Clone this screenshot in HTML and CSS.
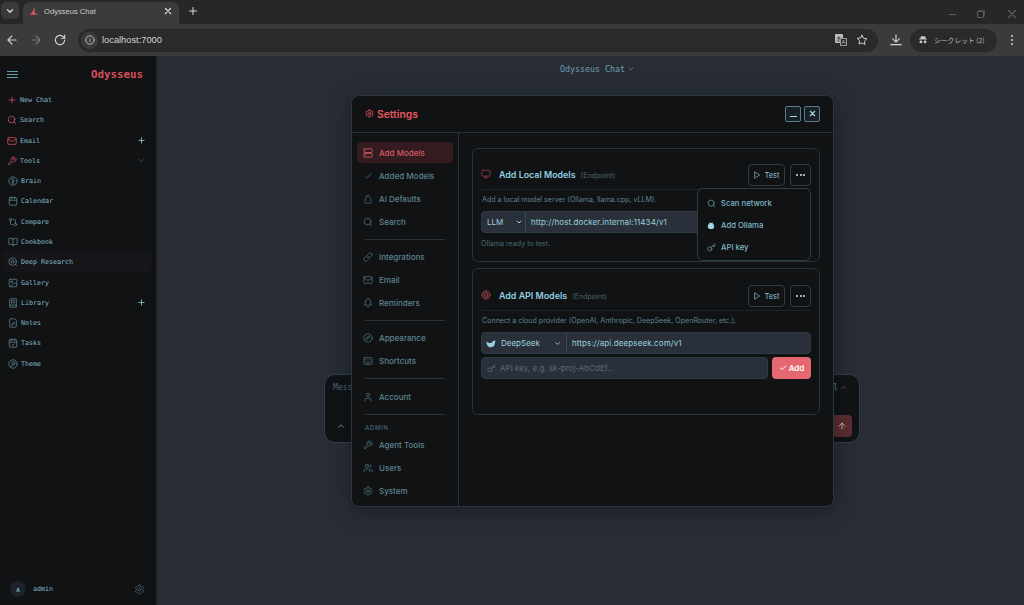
FILE: index.html
```html
<!DOCTYPE html>
<html lang="en">
<head>
<meta charset="utf-8">
<title>Odysseus Chat</title>
<link rel="stylesheet" href="styles.css">
</head>
<body>
<svg class="defs" width="0" height="0" aria-hidden="true">
  <symbol id="i-plus" viewBox="0 0 24 24"><path d="M5 12h14M12 5v14"/></symbol>
  <symbol id="i-search" viewBox="0 0 24 24"><circle cx="11" cy="11" r="8"/><path d="m21 21-4.3-4.3"/></symbol>
  <symbol id="i-mail" viewBox="0 0 24 24"><rect x="2" y="4" width="20" height="16" rx="2"/><path d="m22 7-8.97 5.7a1.94 1.94 0 0 1-2.06 0L2 7"/></symbol>
  <symbol id="i-wrench" viewBox="0 0 24 24"><path d="M14.7 6.3a1 1 0 0 0 0 1.4l1.6 1.6a1 1 0 0 0 1.4 0l3.77-3.77a6 6 0 0 1-7.94 7.94l-6.91 6.91a2.12 2.12 0 0 1-3-3l6.91-6.91a6 6 0 0 1 7.94-7.94l-3.76 3.76z"/></symbol>
  <symbol id="i-brain" viewBox="0 0 24 24"><circle cx="12" cy="12" r="10"/><path d="M12 4v16M12 10 8 7M12 15l4-4M12 17l-4-3"/></symbol>
  <symbol id="i-calendar" viewBox="0 0 24 24"><rect x="3" y="4" width="18" height="18" rx="2"/><path d="M16 2v4M8 2v4M3 10h18"/></symbol>
  <symbol id="i-compare" viewBox="0 0 24 24"><circle cx="18" cy="18" r="3"/><circle cx="6" cy="6" r="3"/><path d="M13 6h3a2 2 0 0 1 2 2v7M11 18H8a2 2 0 0 1-2-2V9"/></symbol>
  <symbol id="i-book" viewBox="0 0 24 24"><path d="M12 7v14M3 18a1 1 0 0 1-1-1V4a1 1 0 0 1 1-1h5a4 4 0 0 1 4 4 4 4 0 0 1 4-4h5a1 1 0 0 1 1 1v13a1 1 0 0 1-1 1h-6a3 3 0 0 0-3 3 3 3 0 0 0-3-3z"/></symbol>
  <symbol id="i-deep" viewBox="0 0 24 24"><circle cx="11" cy="11" r="9"/><circle cx="11" cy="11" r="3.5"/><path d="m21 21-3.5-3.5"/></symbol>
  <symbol id="i-image" viewBox="0 0 24 24"><rect x="3" y="3" width="18" height="18" rx="2"/><circle cx="9" cy="9" r="2"/><path d="m21 15-3.1-3.1a2 2 0 0 0-2.8 0L6 21"/></symbol>
  <symbol id="i-library" viewBox="0 0 24 24"><path d="M4 19.5v-15A2.5 2.5 0 0 1 6.5 2H20v20H6.5a2.5 2.5 0 0 1 0-5H20"/><path d="M9 6h6v6H9z"/></symbol>
  <symbol id="i-note" viewBox="0 0 24 24"><path d="M15 2H6a2 2 0 0 0-2 2v16a2 2 0 0 0 2 2h12a2 2 0 0 0 2-2V7z"/><path d="M9 17l1-3 4-4 2 2-4 4z"/></symbol>
  <symbol id="i-task" viewBox="0 0 24 24"><rect x="3" y="4" width="18" height="18" rx="2"/><path d="M16 2v4M8 2v4M3 10h18M9 16l2 2 4-4"/></symbol>
  <symbol id="i-theme" viewBox="0 0 24 24"><circle cx="12" cy="12" r="10"/><circle cx="13" cy="10" r="3.5"/><path d="M7 20c0-4 2-6 6-6"/></symbol>
  <symbol id="i-gear" viewBox="0 0 24 24"><path d="M12.22 2h-.44a2 2 0 0 0-2 2v.18a2 2 0 0 1-1 1.73l-.43.25a2 2 0 0 1-2 0l-.15-.08a2 2 0 0 0-2.73.73l-.22.38a2 2 0 0 0 .73 2.73l.15.1a2 2 0 0 1 1 1.72v.51a2 2 0 0 1-1 1.74l-.15.09a2 2 0 0 0-.73 2.73l.22.38a2 2 0 0 0 2.73.73l.15-.08a2 2 0 0 1 2 0l.43.25a2 2 0 0 1 1 1.73V20a2 2 0 0 0 2 2h.44a2 2 0 0 0 2-2v-.18a2 2 0 0 1 1-1.73l.43-.25a2 2 0 0 1 2 0l.15.08a2 2 0 0 0 2.73-.73l.22-.39a2 2 0 0 0-.73-2.73l-.15-.08a2 2 0 0 1-1-1.74v-.5a2 2 0 0 1 1-1.74l.15-.09a2 2 0 0 0 .73-2.73l-.22-.38a2 2 0 0 0-2.73-.73l-.15.08a2 2 0 0 1-2 0l-.43-.25a2 2 0 0 1-1-1.73V4a2 2 0 0 0-2-2z"/><circle cx="12" cy="12" r="3"/></symbol>
  <symbol id="i-server" viewBox="0 0 24 24"><rect x="2" y="2" width="20" height="9" rx="2"/><rect x="2" y="13" width="20" height="9" rx="2"/><path d="M6 6.5h.01M6 17.5h.01"/></symbol>
  <symbol id="i-check" viewBox="0 0 24 24"><path d="M20 6 9 17l-5-5"/></symbol>
  <symbol id="i-bag" viewBox="0 0 24 24"><path d="M9 6a3 3 0 0 1 6 0c0 2 5 6 5 12a4 4 0 0 1-4 4H8a4 4 0 0 1-4-4c0-6 5-10 5-12z"/></symbol>
  <symbol id="i-link" viewBox="0 0 24 24"><path d="M10 13a5 5 0 0 0 7.54.54l3-3a5 5 0 0 0-7.07-7.07l-1.72 1.71"/><path d="M14 11a5 5 0 0 0-7.54-.54l-3 3a5 5 0 0 0 7.07 7.07l1.71-1.71"/></symbol>
  <symbol id="i-bell" viewBox="0 0 24 24"><path d="M6 8a6 6 0 0 1 12 0c0 7 3 9 3 9H3s3-2 3-9"/><path d="M10.3 21a1.94 1.94 0 0 0 3.4 0"/></symbol>
  <symbol id="i-appear" viewBox="0 0 24 24"><circle cx="12" cy="12" r="10"/><path d="M8 15c0-4 3-7 8-8-1 5-3 8-8 8z"/></symbol>
  <symbol id="i-keyboard" viewBox="0 0 24 24"><rect x="2" y="4" width="20" height="16" rx="2"/><path d="M6 8h.01M10 8h.01M14 8h.01M18 8h.01M6 12h.01M10 12h.01M14 12h.01M18 12h.01M7 16h10"/></symbol>
  <symbol id="i-user" viewBox="0 0 24 24"><path d="M19 21v-2a4 4 0 0 0-4-4H9a4 4 0 0 0-4 4v2"/><circle cx="12" cy="7" r="4"/></symbol>
  <symbol id="i-users" viewBox="0 0 24 24"><path d="M16 21v-2a4 4 0 0 0-4-4H6a4 4 0 0 0-4 4v2"/><circle cx="9" cy="7" r="4"/><path d="M22 21v-2a4 4 0 0 0-3-3.87M16 3.13a4 4 0 0 1 0 7.75"/></symbol>
  <symbol id="i-monitor" viewBox="0 0 24 24"><rect x="2" y="3" width="20" height="14" rx="2"/><path d="M8 21h8M12 17v4"/></symbol>
  <symbol id="i-globe" viewBox="0 0 24 24"><circle cx="12" cy="12" r="10"/><path d="M2 12h20M4 7h16M4 17h16M12 2a15 15 0 0 1 0 20 15 15 0 0 1 0-20"/></symbol>
  <symbol id="i-play" viewBox="0 0 24 24"><path d="M6 3l14 9-14 9z"/></symbol>
  <symbol id="i-key" viewBox="0 0 24 24"><circle cx="7.5" cy="15.5" r="5.5"/><path d="m21 2-9.6 9.6M15.5 7.5l3 3L22 7l-3-3"/></symbol>
  <symbol id="i-down" viewBox="0 0 24 24"><path d="m6 9 6 6 6-6"/></symbol>
  <symbol id="i-up" viewBox="0 0 24 24"><path d="m18 15-6-6-6 6"/></symbol>
  <symbol id="i-arrow-up" viewBox="0 0 24 24"><path d="m5 12 7-7 7 7M12 19V5"/></symbol>
  <symbol id="i-left" viewBox="0 0 24 24"><path d="m12 19-7-7 7-7M19 12H5"/></symbol>
  <symbol id="i-right" viewBox="0 0 24 24"><path d="M5 12h14M12 5l7 7-7 7"/></symbol>
  <symbol id="i-reload" viewBox="0 0 24 24"><path d="M20 12a8 8 0 1 1-2.4-5.7L20 9"/><path d="M20 3.500v5.500h-5.500"/></symbol>
  <symbol id="i-info" viewBox="0 0 24 24"><circle cx="12" cy="12" r="10"/><path d="M12 16v-5M12 8h.01"/></symbol>
  <symbol id="i-x" viewBox="0 0 24 24"><path d="M18 6 6 18M6 6l12 12"/></symbol>
  <symbol id="i-star" viewBox="0 0 24 24"><path d="m12 2.500 3 6.100 6.700 1-4.850 4.700 1.150 6.700-6-3.150L6 20l1.150-6.700L2.300 8.600l6.700-1z"/></symbol>
  <symbol id="i-download" viewBox="0 0 24 24"><path d="M3 20h18M12 3v12M6.500 10l5.500 5.500 5.500-5.500"/></symbol>
</svg>

<div class="browser">
  <div class="tabstrip">
    <button class="tab-list"><svg class="ic ic-10 bold"><use href="#i-down"/></svg></button>
    <div class="tab">
      <svg class="favicon" viewBox="0 0 16 16"><path d="M9 1 5 10 1 14h14l-4-2-2-1z"/></svg>
      <span class="tab-title">Odysseus Chat</span>
      <svg class="ic ic-10 bold"><use href="#i-x"/></svg>
    </div>
    <svg class="ic ic-12 new-tab"><use href="#i-plus"/></svg>
    <div class="winctl">
      <span class="win-min"></span>
      <span class="win-max"></span>
      <svg class="ic ic-14 win-x"><use href="#i-x"/></svg>
    </div>
  </div>
  <div class="toolbar">
    <svg class="ic ic-14 tb"><use href="#i-left"/></svg>
    <svg class="ic ic-14 tb off"><use href="#i-right"/></svg>
    <svg class="ic ic-14 tb"><use href="#i-reload"/></svg>
    <div class="omnibox">
      <span class="info"><svg class="ic ic-10"><use href="#i-info"/></svg></span>
      <span class="url">localhost:7000</span>
      <span class="translate"><span class="tr-a">あ</span><span class="tr-b">A</span></span>
      <svg class="ic ic-12 star"><use href="#i-star"/></svg>
    </div>
    <svg class="ic ic-14 dl"><use href="#i-download"/></svg>
    <div class="incognito">
      <svg class="spy" viewBox="0 0 16 16"><path d="M4.500 2h7l1 4h2v1h-13V6h2z"/><circle cx="4.700" cy="11" r="2.300"/><circle cx="11.300" cy="11" r="2.300"/><path d="M7 10.500h2"/></svg>
      <span>シークレット (2)</span>
    </div>
    <div class="kebab"><i></i><i></i><i></i></div>
  </div>

  <div class="app">
    <aside class="sidebar">
      <div class="side-head">
        <div class="burger"><i></i><i></i><i></i></div>
        <div class="brand">Odysseus</div>
      </div>
      <nav class="side-nav">
        <div class="side-row first"><svg class="ic ic-s red"><use href="#i-plus"/></svg><span>New Chat</span></div>
        <div class="side-row first"><svg class="ic ic-s red"><use href="#i-search"/></svg><span>Search</span></div>
        <div class="side-row first"><svg class="ic ic-s red"><use href="#i-mail"/></svg><span>Email</span><svg class="ic ic-9 tail"><use href="#i-plus"/></svg></div>
        <div class="side-row first"><svg class="ic ic-s red"><use href="#i-wrench"/></svg><span>Tools</span><svg class="ic ic-9 tail dim"><use href="#i-down"/></svg></div>
        <div class="side-row"><svg class="ic ic-s"><use href="#i-brain"/></svg><span>Brain</span></div>
        <div class="side-row"><svg class="ic ic-s"><use href="#i-calendar"/></svg><span>Calendar</span></div>
        <div class="side-row"><svg class="ic ic-s"><use href="#i-compare"/></svg><span>Compare</span></div>
        <div class="side-row"><svg class="ic ic-s"><use href="#i-book"/></svg><span>Cookbook</span></div>
        <div class="side-row active"><svg class="ic ic-s"><use href="#i-deep"/></svg><span>Deep Research</span></div>
        <div class="side-row"><svg class="ic ic-s"><use href="#i-image"/></svg><span>Gallery</span></div>
        <div class="side-row"><svg class="ic ic-s"><use href="#i-library"/></svg><span>Library</span><svg class="ic ic-9 tail"><use href="#i-plus"/></svg></div>
        <div class="side-row"><svg class="ic ic-s"><use href="#i-note"/></svg><span>Notes</span></div>
        <div class="side-row"><svg class="ic ic-s"><use href="#i-task"/></svg><span>Tasks</span></div>
        <div class="side-row"><svg class="ic ic-s"><use href="#i-theme"/></svg><span>Theme</span></div>
      </nav>
      <div class="side-foot">
        <span class="avatar">A</span>
        <span class="username">admin</span>
        <svg class="ic ic-11 foot-gear"><use href="#i-gear"/></svg>
      </div>
    </aside>

    <main class="main">
      <div class="chat-title">Odysseus Chat <svg class="ic ic-8"><use href="#i-down"/></svg></div>
      <div class="composer">
        <div class="composer-top"><span class="placeholder">Message</span><span class="model">l <svg class="ic ic-7"><use href="#i-up"/></svg></span></div>
        <div class="composer-bottom">
          <svg class="ic ic-10"><use href="#i-up"/></svg>
          <span class="send"><svg class="ic ic-10"><use href="#i-arrow-up"/></svg></span>
        </div>
      </div>

      <section class="modal">
        <header class="modal-head">
          <svg class="ic ic-9 head-gear"><use href="#i-gear"/></svg>
          <h1>Settings</h1>
          <div class="modal-actions">
            <button class="win-btn"><span class="minus"></span></button>
            <button class="win-btn"><svg class="ic ic-9 bold"><use href="#i-x"/></svg></button>
          </div>
        </header>
        <div class="modal-body">
          <nav class="set-nav">
            <div class="set-item current"><svg class="ic ic-10"><use href="#i-server"/></svg>Add Models</div>
            <div class="set-item"><svg class="ic ic-10"><use href="#i-check"/></svg>Added Models</div>
            <div class="set-item"><svg class="ic ic-10"><use href="#i-bag"/></svg>AI Defaults</div>
            <div class="set-item"><svg class="ic ic-10"><use href="#i-search"/></svg>Search</div>
            <hr class="set-sep">
            <div class="set-item"><svg class="ic ic-10"><use href="#i-link"/></svg>Integrations</div>
            <div class="set-item"><svg class="ic ic-10"><use href="#i-mail"/></svg>Email</div>
            <div class="set-item"><svg class="ic ic-10"><use href="#i-bell"/></svg>Reminders</div>
            <hr class="set-sep">
            <div class="set-item"><svg class="ic ic-10"><use href="#i-appear"/></svg>Appearance</div>
            <div class="set-item"><svg class="ic ic-10"><use href="#i-keyboard"/></svg>Shortcuts</div>
            <hr class="set-sep sep-wide">
            <div class="set-item"><svg class="ic ic-10"><use href="#i-user"/></svg>Account</div>
            <hr class="set-sep sep-tight">
            <div class="set-label">ADMIN</div>
            <div class="set-item"><svg class="ic ic-10"><use href="#i-wrench"/></svg>Agent Tools</div>
            <div class="set-item"><svg class="ic ic-10"><use href="#i-users"/></svg>Users</div>
            <div class="set-item"><svg class="ic ic-10"><use href="#i-gear"/></svg>System</div>
          </nav>
          <div class="set-content">
            <article class="card card-local">
              <div class="card-head">
                <svg class="ic ic-10 darkred"><use href="#i-monitor"/></svg>
                <h2>Add Local Models</h2><span class="muted">(Endpoint)</span>
                <button class="btn-test"><svg class="ic ic-8"><use href="#i-play"/></svg>Test</button>
                <button class="btn-more"><i></i><i></i><i></i></button>
              </div>
              <p class="desc">Add a local model server (Ollama, llama.cpp, vLLM).</p>
              <div class="field-row">
                <span class="select llm">LLM<svg class="ic ic-8 bold"><use href="#i-down"/></svg></span>
                <span class="value">http://host.docker.internal:11434/v1</span>
              </div>
              <p class="status">Ollama ready to test.</p>
              <div class="menu">
                <div class="menu-item"><svg class="ic ic-9"><use href="#i-search"/></svg>Scan network</div>
                <div class="menu-item"><svg class="ollama" viewBox="0 0 10 10"><path d="M2.800 2.500 3.300.800 4.200 2h1.600L6.700.800l.5 1.700C8.500 3.500 9 5 9 6.500 9 8.500 7.500 9.500 5 9.500S1 8.500 1 6.500C1 5 1.500 3.500 2.800 2.500z"/></svg>Add Ollama</div>
                <div class="menu-item"><svg class="ic ic-9"><use href="#i-key"/></svg>API key</div>
              </div>
            </article>
            <article class="card card-api">
              <div class="card-head">
                <svg class="ic ic-10 darkred"><use href="#i-globe"/></svg>
                <h2>Add API Models</h2><span class="muted">(Endpoint)</span>
                <button class="btn-test"><svg class="ic ic-8"><use href="#i-play"/></svg>Test</button>
                <button class="btn-more"><i></i><i></i><i></i></button>
              </div>
              <p class="desc">Connect a cloud provider (OpenAI, Anthropic, DeepSeek, OpenRouter, etc.).</p>
              <div class="field-row">
                <span class="select provider"><svg class="whale" viewBox="0 0 12 10"><path d="M.5 2.500C2 4 4 4.500 6 4.500 7 4.500 7.500 3 8.500 2 9.500 1.200 10.500 1.200 11.500 1.500 11 3 10.500 4 10.500 5.500 10 8 8 9.500 5.500 9.500 2.500 9.500.5 6.500.5 2.500z"/></svg>DeepSeek<svg class="ic ic-6 bold"><use href="#i-down"/></svg></span>
                <span class="value">https://api.deepseek.com/v1</span>
              </div>
              <div class="key-row">
                <span class="key-input"><svg class="ic ic-9"><use href="#i-key"/></svg>API key, e.g. sk-proj-AbCdEf...</span>
                <button class="btn-add"><svg class="ic ic-8 bold"><use href="#i-check"/></svg>Add</button>
              </div>
            </article>
          </div>
        </div>
      </section>
    </main>
  </div>
</div>
</body>
</html>
```
FILE: styles.css
```css
* { box-sizing: border-box; }
html, body { margin: 0; height: 100%; overflow: hidden; background: #282c35; }
body { font-family: Inter, "Liberation Sans", sans-serif; }
.defs { position: absolute; }
button { font: inherit; padding: 0; border: 0; background: none; color: inherit; }
p, h1, h2 { margin: 0; }

.ic { fill: none; stroke: currentColor; stroke-width: 2; stroke-linecap: round; stroke-linejoin: round; flex: none; display: block; }
.bold { stroke-width: 3; }
.ic-s { width: 10px; height: 10px; margin: 0 .5px; }
.ic-6 { width: 7px; height: 7px; }
.ic-7 { width: 7px; height: 7px; }
.ic-8 { width: 8px; height: 8px; }
.ic-9 { width: 9px; height: 9px; }
.ic-10 { width: 10px; height: 10px; }
.ic-11 { width: 11px; height: 11px; }
.ic-12 { width: 12px; height: 12px; }
.ic-14 { width: 14px; height: 14px; }
.red { color: #c24f5a; }
.darkred { color: #8c3d45; }

.browser { width: 1024px; height: 605px; display: flex; flex-direction: column; }

/* tab strip */
.tabstrip { height: 24px; background: #272727; display: flex; align-items: flex-end; color: #d8d8d8; flex: none; }
.tab-list { width: 18px; height: 17px; margin: 0 4px 5px 1px; border-radius: 5px; background: #3a3a3a; display: flex; align-items: center; justify-content: center; }
.tab { width: 156px; height: 22px; background: #3b3b3b; border-radius: 7px 7px 0 0; display: flex; align-items: center; padding: 0 6px 4px 6px; }
.favicon { width: 10px; height: 10px; fill: #d9535f; flex: none; }
.tab-title { flex: 1; margin-left: 5px; font: 7.600px "Liberation Sans", sans-serif; color: #c9c9c9; }
.new-tab { margin: 0 0 7px 8px; }
.winctl { margin-left: auto; display: flex; align-items: center; gap: 21px; padding: 0 5px 3px 0; color: #666; }
.win-min { width: 7px; height: 1px; background: #5f5f5f; }
.win-max { width: 7px; height: 7px; border: 1px solid #5f5f5f; border-radius: 1px; box-shadow: 1px -1px 0 0 #4f4f4f; }
.win-x { color: #5c5c5c; }

/* toolbar */
.toolbar { height: 32px; background: #3b3b3b; display: flex; align-items: center; color: #cfcfcf; flex: none; padding-left: 5px; }
.tb { margin-right: 10px; }
.tb.off { color: #777; }
.omnibox { width: 800px; height: 23px; margin-left: 1px; background: #2a2a2a; border-radius: 12px; display: flex; align-items: center; padding: 0 10px 0 3px; }
.info { width: 17px; height: 17px; border-radius: 50%; background: #3b3b3b; display: flex; align-items: center; justify-content: center; }
.url { margin-left: 4px; flex: 1; font: 9.300px "Liberation Sans", sans-serif; color: #d4d4d4; }
.translate { position: relative; width: 12px; height: 12px; margin-right: 9px; }
.tr-a { position: absolute; left: 0; top: 0; width: 8px; height: 9px; background: #bdbdbd; color: #333; font: 6px/9px "Noto Sans CJK JP", sans-serif; text-align: center; border-radius: 1px; }
.tr-b { position: absolute; right: 0; bottom: 0; width: 7px; height: 8px; border: 1px solid #9a9a9a; background: #2a2a2a; color: #bbb; font: 6px/6px "Liberation Sans", sans-serif; text-align: center; }
.dl { margin-left: 10.500px; }
.incognito { width: 87px; height: 23px; margin-left: 7.500px; background: #2a2a2a; border-radius: 12px; display: flex; align-items: center; padding-left: 8px; font: 6.800px "Noto Sans CJK JP", sans-serif; color: #bdbdbd; gap: 6px; white-space: nowrap; }
.spy { width: 10px; height: 10px; fill: #c9c9c9; flex: none; }
.kebab { margin-left: 14px; display: flex; flex-direction: column; gap: 2px; }
.kebab i { width: 2px; height: 2px; background: #cfcfcf; display: block; border-radius: 50%; }

/* app */
.app { flex: 1; min-height: 0; display: flex; }
.sidebar { width: 157px; background: #111214; display: flex; flex-direction: column; font-family: "DejaVu Sans Mono", monospace; flex: none; border-right: 1px solid #1d2026; }
.side-head { height: 34px; display: flex; align-items: center; justify-content: space-between; padding: 2px 13px 0 7px; flex: none; }
.burger { display: flex; flex-direction: column; gap: 2px; }
.burger i { display: block; width: 11px; height: 1px; background: #62a0ae; }
.brand { font-size: 10.800px; font-weight: 700; color: #d9505c; }
.side-nav { flex: 1; }
.side-row { height: 20.280px; display: flex; align-items: center; gap: 3px; margin: 0 5px 0 3px; padding: 0 5px 0 4px; font-size: 6.650px; border-radius: 3px; color: #84bac9; }
.side-row.first > .ic:first-child { margin-left: -.5px; }
.side-row > .ic:first-child:not(.red) { color: #5a7f8a; }
.side-row .tail { margin-left: auto; color: #9cd6e6; }
.side-row .tail.dim { color: #3f5660; }
.side-row.active { background: #16161a; }
.side-foot { height: 32px; display: flex; align-items: center; padding: 0 10px; color: #84bac9; font-size: 6.700px; flex: none; }
.avatar { width: 16px; height: 16px; background: #1c2229; border-radius: 50%; display: flex; align-items: center; justify-content: center; font-weight: 700; font-size: 6px; color: #79a9b6; }
.username { margin-left: 7px; flex: 1; }
.foot-gear { color: #3e5a64; margin-right: 1px; }

/* main */
.main { flex: 1; background: #282c35; position: relative; min-width: 0; }
.chat-title { margin-top: 8px; padding-left: 403px; display: flex; align-items: center; gap: 2px; height: 9px; font: 8.300px "DejaVu Sans Mono", monospace; color: #6f9fae; }
.composer { width: 536px; height: 69px; margin: 301px 0 0 167px; background: #121316; border: 1px solid #2d3f4a; border-radius: 11px; display: flex; flex-direction: column; justify-content: space-between; padding: 8px 7px 5.500px 8px; font: 8px "DejaVu Sans Mono", monospace; color: #4c6570; }
.composer-top, .composer-bottom { display: flex; justify-content: space-between; align-items: center; }
.model { display: flex; align-items: center; gap: 2px; color: #6c8f9c; padding-right: 5px; }
.composer-bottom { color: #7fa8b5; padding-left: 3px; }
.send { width: 20px; height: 22px; background: #5a2c31; border-radius: 4px; display: flex; align-items: center; justify-content: center; color: #d9c9c9; }

/* modal */
.modal { position: absolute; left: 194px; top: 39px; width: 483px; height: 412px; background: #111214; border: 1px solid #273842; border-radius: 8px; display: flex; flex-direction: column; box-shadow: 0 4px 20px rgba(0,0,0,.35); color: #7fb7c7; }
.modal-head { height: 37px; display: flex; align-items: center; padding: 0 13px 1px; gap: 3px; border-bottom: 1px solid #24333c; flex: none; }
.head-gear { color: #e0525f; stroke-width: 2.500; }
.modal-head h1 { font-size: 10.300px; font-weight: 600; color: #e2595f; }
.modal-actions { margin-left: auto; display: flex; gap: 3px; }
.win-btn { width: 16px; height: 16px; border: 1px solid #55808e; border-radius: 2px; display: flex; align-items: center; justify-content: center; color: #a9d8e4; background: #1a2027; }
.minus { width: 7px; height: 1.500px; background: #a9d8e4; margin-top: 6px; display: block; }
.modal-body { flex: 1; min-height: 0; display: flex; }

.set-nav { width: 107px; padding: 9px 5px 0; border-right: 1px solid #24333c; flex: none; }
.set-item { height: 23px; display: flex; align-items: center; gap: 6px; padding-left: 6px; font-size: 8px; font-weight: 500; color: #5d8492; border-radius: 4px; }
.set-item .ic { color: #4a6b77; }
.set-item.current { height: 21px; margin-bottom: 1px; background: #331b20; color: #d65a64; }
.set-item.current .ic { color: #d65a64; }
.set-sep { height: 1px; border: 0; background: #24333c; margin: 6px 8px 5px; }
.set-sep.sep-wide { margin-bottom: 6px; }
.set-sep.sep-tight { margin-bottom: 4px; }
.set-label { font-size: 6px; font-weight: 600; letter-spacing: .6px; color: #3f5c67; height: 14px; padding: 5px 0 0 8px; }

.set-content { flex: 1; min-width: 0; padding: 15px 13px 0; display: flex; flex-direction: column; gap: 6px; }
.card { position: relative; border: 1px solid #24333c; border-radius: 6px; padding: 15px 8px 0; }
.card-local { height: 114px; }
.card-api { height: 147px; padding-top: 16px; }
.card-head { height: 26px; display: flex; align-items: flex-start; border-bottom: 1px solid #1b242a; }
.card-head > .ic { margin-top: 5px; color: #8c3d45; }
.card-head h2 { margin: 5px 0 0 8px; font-size: 8.900px; font-weight: 600; color: #8fd0e2; }
.card-head .muted { margin: 7px 0 0 5px; font-size: 7.100px; color: #4c6570; }
.btn-test { margin-left: auto; width: 37px; height: 22px; border: 1px solid #2b3f49; border-radius: 4px; display: flex; align-items: center; justify-content: center; gap: 3px; font-size: 7.500px; color: #8fc0ce; }
.btn-more { margin-left: 5px; width: 21px; height: 22px; border: 1px solid #2b3f49; border-radius: 4px; display: flex; align-items: center; justify-content: center; gap: 1.500px; }
.btn-more i { width: 2px; height: 2px; background: #cbe8f0; border-radius: 50%; display: block; }
.desc { margin: 5px 0 0 1px; height: 16px; font-size: 7.100px; line-height: 9px; color: #5d8492; }
.field-row { height: 22px; display: flex; align-items: stretch; background: #2a303a; border: 1px solid #2b3c46; border-radius: 4px; font-size: 8px; color: #9bd0de; }
.select { display: flex; align-items: center; border-right: 1px solid #3a4a54; flex: none; }
.select.llm { width: 44px; padding: 0 2px 0 5px; justify-content: space-between; }
.select.provider { width: 85px; padding: 0 5px 0 4px; gap: 5px; }
.select.provider .ic { margin-left: auto; }
.whale { width: 10px; height: 9px; fill: #9bd0de; flex: none; }
.value { padding: 0 5px; display: flex; align-items: center; white-space: nowrap; letter-spacing: .1px; }
.status { margin-top: 6px; font-size: 7.100px; color: #4c6a75; line-height: 9px; }

.menu { position: absolute; top: 39px; right: 8px; width: 114px; height: 73px; padding: 3px 0; background: #111214; border: 1px solid #2b3f49; border-radius: 6px; z-index: 2; }
.menu-item { height: 22px; display: flex; align-items: center; gap: 5px; padding-left: 9px; font-size: 7.700px; font-weight: 500; color: #7fb7c7; }
.menu-item .ic { color: #6c9aa8; }
.ollama { width: 8px; height: 9px; fill: #9bd6e6; flex: none; margin-right: 1px; }

.key-row { display: flex; gap: 4px; margin-top: 3px; }
.key-input { flex: 1; height: 22px; background: #2a303a; border: 1px solid #2b3c46; border-radius: 4px; display: flex; align-items: center; gap: 4px; padding-left: 5px; font-size: 8px; color: #566c78; }
.key-input .ic { color: #566c78; }
.btn-add { width: 39px; height: 22px; background: #e5676f; border-radius: 4px; display: flex; align-items: center; justify-content: center; gap: 2px; font-size: 8px; font-weight: 600; color: #fff; }
```
